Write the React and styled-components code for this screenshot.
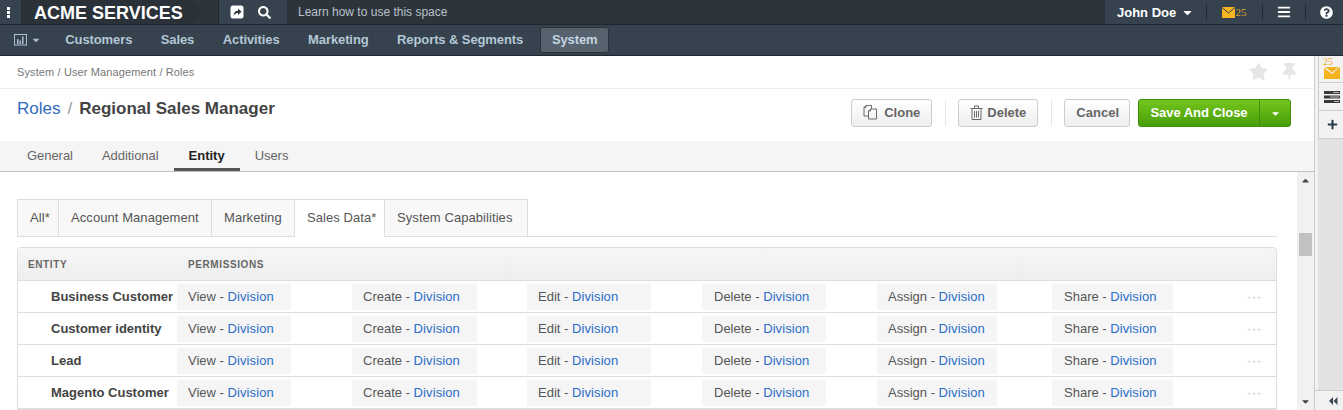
import React from 'react';
import styled, { createGlobalStyle } from 'styled-components';
import { FaStar, FaThumbtack, FaSearch, FaCaretDown, FaBars, FaQuestionCircle, FaPlus, FaCaretUp } from 'react-icons/fa';

const GlobalStyle = createGlobalStyle`
    html, body {
        margin: 0;
        padding: 0;
        height: 410px;
        overflow: hidden;
        background: #fff;
        font-family: "Liberation Sans", Arial, sans-serif;
    }
`

const perms = [
    { name: 'View', width: 114, pad: 11 },
    { name: 'Create', width: 125, pad: 11 },
    { name: 'Edit', width: 124, pad: 11 },
    { name: 'Delete', width: 124, pad: 12 },
    { name: 'Assign', width: 120, pad: 11 },
    { name: 'Share', width: 121, pad: 12 },
];
const subTabs = [
    { label: 'All*', width: 42 },
    { label: 'Account Management', width: 153 },
    { label: 'Marketing', width: 83 },
    { label: 'Sales Data*', width: 90, active: true },
    { label: 'System Capabilities', width: 143 },
];
const entities = ['Business Customer', 'Customer identity', 'Lead', 'Magento Customer'];
const navItems = ['Customers', 'Sales', 'Activities', 'Marketing', 'Reports & Segments'];

const App = () => {
    return (
        <Page>
            <GlobalStyle />
            <TopBar>
                <Kebab><i /><i /><i /></Kebab>
                <Logo>ACME SERVICES</Logo>
                <QuickBox>
                    <svg width="14" height="14" viewBox="0 0 14 14">
                        <rect x="0.5" y="0.5" width="13" height="13" rx="2.5" fill="#fff" />
                        <path d="M3.5 11 C3.5 7.5 5.5 5.8 8 5.8 V3.6 L11.5 6.8 L8 10 V8 C6 8 4.6 8.8 3.5 11Z" fill="#2c353e" />
                    </svg>
                    <FaSearch size={13} color="#fff" />
                </QuickBox>
                <Learn>Learn how to use this space</Learn>
                <UserMenu>
                    <UserName>John Doe</UserName>
                    <FaCaretDown size={13} color="#fff" />
                </UserMenu>
                <TopCell $w={56}>
                    <svg width="13" height="11" viewBox="0 0 13 11">
                        <rect width="13" height="11" fill="#f5b41e" />
                        <path d="M0 0.5 L6.5 6 L13 0.5" fill="none" stroke="#36424e" strokeWidth="1" />
                    </svg>
                    <MailCount>25</MailCount>
                </TopCell>
                <TopCell $w={43}><FaBars size={14} color="#fff" /></TopCell>
                <TopCell $w={38} $shift={4}><FaQuestionCircle size={13} color="#fff" /></TopCell>
            </TopBar>
            <NavBar>
                <ChartButton>
                    <svg width="13" height="12" viewBox="0 0 13 12">
                        <rect x="0.5" y="0.5" width="12" height="10.5" fill="none" stroke="#a9bfd0" />
                        <path d="M3 5h1.5v5H3zM5.5 6.5H7V10H5.5zM8 2.5h1.5V10H8z" fill="#a9bfd0" />
                    </svg>
                    <FaCaretDown size={10} color="#a9bfd0" />
                </ChartButton>
                {navItems.map(item => <NavItem key={item}>{item}</NavItem>)}
                <NavItem $active>System</NavItem>
            </NavBar>
            <Body>
                <Main>
                    <Breadcrumbs>
                        System / User Management / Roles
                        <PageIcons>
                            <FaStar size={19} color="#e6e6e6" />
                            <FaThumbtack size={17} color="#e6e6e6" />
                        </PageIcons>
                    </Breadcrumbs>
                    <TitleRow>
                        <Title>
                            <TitleLink>Roles</TitleLink>
                            <TitleSlash>/</TitleSlash>
                            <strong>Regional Sales Manager</strong>
                        </Title>
                        <Actions>
                            <Button>
                                <svg width="17" height="16" viewBox="0 0 17 16" fill="none" stroke="#6b6b6b">
                                    <path d="M1 3.5 L3 1.5 H8.5 V5 M1 3.5 V12 H5.5 M1 3.5 H3 V1.5" />
                                    <path d="M5.5 7 L7.5 5 H13.5 V15 H5.5 Z M5.5 7 H7.5 V5" />
                                </svg>
                                Clone
                            </Button>
                            <Divider />
                            <Button>
                                <svg width="13" height="15" viewBox="0 0 13 15" fill="none" stroke="#6b6b6b">
                                    <path d="M0.5 3.5h12M2 3.5V14.5H11V3.5M4.5 3.5V1H8.5V3.5M4.5 6v6.5M6.5 6v6.5M8.5 6v6.5" />
                                </svg>
                                Delete
                            </Button>
                            <Divider />
                            <Button $narrow>Cancel</Button>
                            <SaveGroup>
                                <SaveMain>Save And Close</SaveMain>
                                <SaveCaret><FaCaretDown size={11} color="#fff" /></SaveCaret>
                            </SaveGroup>
                        </Actions>
                    </TitleRow>
                    <TabsBar>
                        <Tab>General</Tab>
                        <Tab>Additional</Tab>
                        <Tab $active>Entity</Tab>
                        <Tab>Users</Tab>
                    </TabsBar>
                    <ScrollArea>
                        <Content>
                            <SubTabs>
                                {subTabs.map((tab, i) => (
                                    <SubTab key={tab.label} $w={tab.width} $first={i === 0} $active={tab.active}>{tab.label}</SubTab>
                                ))}
                            </SubTabs>
                            <Table>
                                <TableHead>
                                    <HeadEntity>ENTITY</HeadEntity>
                                    <span>PERMISSIONS</span>
                                </TableHead>
                                {entities.map(entity => (
                                    <Row key={entity}>
                                        <EntityName>{entity}</EntityName>
                                        <Cells>
                                            {perms.map(perm => (
                                                <CellSlot key={perm.name}>
                                                    <Perm $w={perm.width} $pad={perm.pad}>{perm.name} - <PermLink>Division</PermLink></Perm>
                                                </CellSlot>
                                            ))}
                                        </Cells>
                                        <Dots>···</Dots>
                                    </Row>
                                ))}
                            </Table>
                        </Content>
                        <Scrollbar>
                            <FaCaretUp size={11} color="#444" />
                            <Thumb />
                            <FaCaretDown size={11} color="#444" />
                        </Scrollbar>
                    </ScrollArea>
                </Main>
                <SideBar>
                    <SideStack>
                        <SideButton $h={27}>
                            <SideCount>25</SideCount>
                            <SideMail width="16" height="12" viewBox="0 0 16 12">
                                <path d="M0 1 L8 7 L16 0 V12 H0Z" fill="#f5b41e" />
                                <path d="M1 0 H15 L8 5.5Z" fill="#f5b41e" />
                            </SideMail>
                        </SideButton>
                        <SideButton $h={28}>
                            <svg width="16" height="12" viewBox="0 0 16 12">
                                <path d="M0 0h16v3H0zM0 4.5h16v3H0zM0 9h16v3H0z" fill="#3a3a3a" />
                                <path d="M9 1h6v1H9zM6 5.5h9v1H6zM10 10h5v1h-5z" fill="#bbb" />
                            </svg>
                        </SideButton>
                        <SideButton $h={28}><FaPlus size={11} color="#2b3a48" /></SideButton>
                    </SideStack>
                    <Collapse>
                        <svg width="9" height="8" viewBox="0 0 9 8">
                            <path d="M4 0v8L0 4zM8.5 0v8L4.5 4z" fill="#3a4a5a" />
                        </svg>
                    </Collapse>
                </SideBar>
            </Body>
        </Page>
    )
}

const Page = styled.div`
    width: 1343px;
    height: 410px;
    display: flex;
    flex-direction: column;
    overflow: hidden;
    font-size: 13px;
    color: #444;
`

const TopBar = styled.div`
    height: 25px;
    flex: none;
    box-sizing: border-box;
    display: flex;
    align-items: center;
    background: #2d343c;
    border-bottom: 1px solid #1f262d;
`

const Kebab = styled.div`
    width: 17px;
    height: 24px;
    padding-right: 4px;
    background: #37434f;
    display: flex;
    flex-direction: column;
    align-items: center;
    justify-content: center;
    gap: 1px;
    i {
        width: 3px;
        height: 3px;
        background: #fff;
    }
`

const Logo = styled.div`
    width: 182px;
    height: 24px;
    padding-left: 13px;
    box-sizing: border-box;
    background: #2a3138;
    color: #fff;
    font-size: 18px;
    font-weight: bold;
    line-height: 26px;
    clip-path: polygon(0 0, 93% 0, 100% 50%, 93% 100%, 0 100%);
`

const QuickBox = styled.div`
    margin-left: 15px;
    width: 69px;
    height: 24px;
    background: #36424e;
    border-left: 1px solid #1f262d;
    display: flex;
    align-items: center;
    gap: 14px;
    padding-left: 11px;
    box-sizing: border-box;
`

const Learn = styled.div`
    margin-left: 11px;
    flex: 1;
    color: #b9c1c8;
    font-size: 12px;
`

const UserMenu = styled.div`
    width: 101px;
    height: 24px;
    display: flex;
    align-items: center;
    padding-left: 12px;
    gap: 5px;
    box-sizing: border-box;
    background: #36424e;
`

const UserName = styled.span`
    color: #fff;
    font-size: 13px;
    font-weight: bold;
`

const TopCell = styled.div`
    width: ${props => props.$w}px;
    height: 24px;
    padding-left: ${props => props.$shift || 0}px;
    display: flex;
    align-items: center;
    justify-content: center;
    box-sizing: border-box;
    background: #36424e;
    position: relative;
    &::before {
        content: '';
        position: absolute;
        left: 0;
        top: 4px;
        bottom: 4px;
        width: 1px;
        background: #1f262d;
    }
`

const MailCount = styled.span`
    color: #d9a12b;
    font-family: "Liberation Serif", serif;
    font-size: 11px;
    margin-left: 1px;
`

const NavBar = styled.div`
    height: 31px;
    flex: none;
    box-sizing: border-box;
    display: flex;
    align-items: center;
    background: #36424e;
    border-bottom: 1px solid #20272e;
    padding-left: 14px;
`

const ChartButton = styled.div`
    display: flex;
    align-items: center;
    gap: 4px;
    width: 37px;
`

const NavItem = styled.div`
    height: 26px;
    line-height: 26px;
    padding: 0 ${props => props.$active ? '11.5px' : '14.25px'};
    margin-left: ${props => props.$active ? '3px' : '0'};
    color: ${props => props.$active ? '#c5d4e0' : '#b4c7d6'};
    font-size: 13px;
    font-weight: bold;
    letter-spacing: -0.1px;
    border-radius: 3px;
    background: ${props => props.$active ? '#56636f' : 'transparent'};
    box-shadow: ${props => props.$active ? 'inset 0 0 0 1px #2a333b' : 'none'};
`

const Body = styled.div`
    flex: 1;
    display: flex;
    min-height: 0;
`

const Main = styled.div`
    flex: 1;
    min-width: 0;
    display: flex;
    flex-direction: column;
    border-right: 1px solid #ccc;
`

const Breadcrumbs = styled.div`
    height: 33px;
    flex: none;
    box-sizing: border-box;
    display: flex;
    align-items: center;
    justify-content: space-between;
    padding: 0 17px;
    border-bottom: 1px solid #eee;
    font-size: 11px;
    letter-spacing: 0.12px;
    color: #777;
`

const PageIcons = styled.div`
    display: flex;
    align-items: center;
    gap: 13px;
    margin-right: -1px;
    padding-bottom: 2px;
`

const TitleRow = styled.div`
    height: 52px;
    flex: none;
    display: flex;
    justify-content: space-between;
    padding: 0 23px 0 17px;
    box-sizing: border-box;
`

const Title = styled.div`
    padding-top: 10px;
    font-size: 17px;
    line-height: 20px;
    strong {
        color: #444;
    }
`

const TitleLink = styled.span`
    color: #2f6cc0;
`

const TitleSlash = styled.span`
    color: #999;
    margin: 0 7px;
`

const Actions = styled.div`
    display: flex;
    align-items: flex-start;
    padding-top: 10px;
`

const Button = styled.div`
    height: 28px;
    box-sizing: border-box;
    padding: 0 ${props => props.$narrow ? '10px' : '11px'} 2px 11px;
    display: flex;
    align-items: center;
    gap: 4px;
    border: 1px solid #ccc;
    border-radius: 3px;
    background: linear-gradient(#fff, #eee);
    color: #666;
    font-size: 13px;
    font-weight: bold;
`

const Divider = styled.div`
    width: 1px;
    height: 26px;
    margin: 1px 12px 1px 13px;
    background: #e6e6e6;
`

const SaveGroup = styled.div`
    margin-left: 8px;
    height: 28px;
    display: flex;
    border-radius: 3px;
    overflow: hidden;
    border: 1px solid #3f8f0c;
    box-sizing: border-box;
    background: linear-gradient(#74c51d, #479e08);
`

const SaveMain = styled.div`
    width: 120px;
    text-align: center;
    line-height: 25px;
    color: #fff;
    font-size: 13px;
    font-weight: bold;
    letter-spacing: -0.05px;
    border-right: 1px solid #3f8f0c;
`

const SaveCaret = styled.div`
    width: 30px;
    display: flex;
    align-items: center;
    justify-content: center;
`

const TabsBar = styled.div`
    height: 31px;
    flex: none;
    box-sizing: border-box;
    display: flex;
    padding-left: 13px;
    background: #f5f5f5;
    border-bottom: 1px solid #c4c4c4;
`

const Tab = styled.div`
    padding: 0 15px 0 ${props => props.$active ? '15px' : '14px'};
    height: 30px;
    box-sizing: border-box;
    line-height: 29px;
    font-size: 13px;
    letter-spacing: ${props => props.$active ? '0' : '-0.05px'};
    color: ${props => props.$active ? '#222' : '#666'};
    font-weight: ${props => props.$active ? 'bold' : 'normal'};
    border-bottom: ${props => props.$active ? '3px solid #555' : 'none'};
    margin-right: ${props => props.$active ? '1px' : '0'};
`

const ScrollArea = styled.div`
    flex: 1;
    display: flex;
    min-height: 0;
`

const Content = styled.div`
    flex: 1;
    min-width: 0;
    padding: 27px 20px 0 17px;
    overflow: hidden;
`

const SubTabs = styled.div`
    display: flex;
    height: 38px;
    box-sizing: border-box;
    border-bottom: 1px solid #ddd;
    margin-bottom: 10px;
`

const SubTab = styled.div`
    width: ${props => props.$w}px;
    height: 38px;
    flex: none;
    box-sizing: border-box;
    padding-left: 12px;
    line-height: 35px;
    font-size: 13px;
    letter-spacing: 0.07px;
    color: #555;
    background: ${props => props.$active ? '#fff' : '#f8f8f8'};
    border: 1px solid #ddd;
    border-left: ${props => props.$first ? '1px solid #ddd' : 'none'};
    border-bottom: ${props => props.$active ? '1px solid #fff' : '1px solid #ddd'};
`

const Table = styled.div`
    border: 1px solid #ddd;
    border-radius: 4px 4px 0 0;
`

const TableHead = styled.div`
    height: 33px;
    box-sizing: border-box;
    display: flex;
    align-items: center;
    padding-left: 10px;
    background: linear-gradient(#f6f6f6, #eee);
    border-bottom: 1px solid #ddd;
    border-radius: 4px 4px 0 0;
    font-size: 10px;
    font-weight: bold;
    color: #666;
    letter-spacing: 0.6px;
`

const HeadEntity = styled.span`
    width: 160px;
`

const Row = styled.div`
    height: 32px;
    box-sizing: border-box;
    padding-top: 1px;
    display: flex;
    align-items: center;
    border-bottom: 1px solid #ddd;
`

const EntityName = styled.div`
    width: 159px;
    padding: 0 0 2px 33px;
    box-sizing: border-box;
    font-size: 13px;
    font-weight: bold;
    color: #444;
    white-space: nowrap;
`

const Cells = styled.div`
    display: flex;
`

const CellSlot = styled.div`
    width: 175px;
`

const Perm = styled.div`
    width: ${props => props.$w}px;
    height: 26px;
    line-height: 25px;
    padding-left: ${props => props.$pad}px;
    box-sizing: border-box;
    background: #f5f5f5;
    font-size: 13px;
    color: #555;
`

const PermLink = styled.span`
    color: #2a6dc9;
    letter-spacing: 0.1px;
`

const Dots = styled.div`
    margin-left: 20px;
    color: #aaa;
    font-size: 12px;
    letter-spacing: 1px;
`

const Scrollbar = styled.div`
    width: 17px;
    flex: none;
    background: #f1f1f1;
    display: flex;
    flex-direction: column;
    align-items: center;
    justify-content: space-between;
    padding: 3px 0;
    box-sizing: border-box;
    position: relative;
`

const Thumb = styled.div`
    position: absolute;
    top: 61px;
    left: 2px;
    width: 13px;
    height: 23px;
    background: #c1c1c1;
`

const SideBar = styled.div`
    width: 28px;
    flex: none;
    display: flex;
    flex-direction: column;
    background: #e2e2e2;
`

const SideStack = styled.div`
    flex: 1;
    border-left: 3px solid #f2f2f2;
`

const SideButton = styled.div`
    height: ${props => props.$h}px;
    box-sizing: border-box;
    padding-left: 2px;
    display: flex;
    align-items: center;
    justify-content: center;
    background: #f2f2f2;
    border-left: 1px solid #ccc;
    border-bottom: 1px solid #ccc;
    position: relative;
`

const SideMail = styled.svg`
    margin-top: 8px;
`

const SideCount = styled.span`
    position: absolute;
    left: 4px;
    top: 1px;
    font-family: "Liberation Serif", serif;
    font-size: 10px;
    line-height: 10px;
    color: #f5a623;
`

const Collapse = styled.div`
    height: 20px;
    flex: none;
    box-sizing: border-box;
    padding-left: 9px;
    display: flex;
    align-items: center;
    justify-content: center;
    background: #f1f1f1;
    border-top: 1px solid #ccc;
`

export default App;
